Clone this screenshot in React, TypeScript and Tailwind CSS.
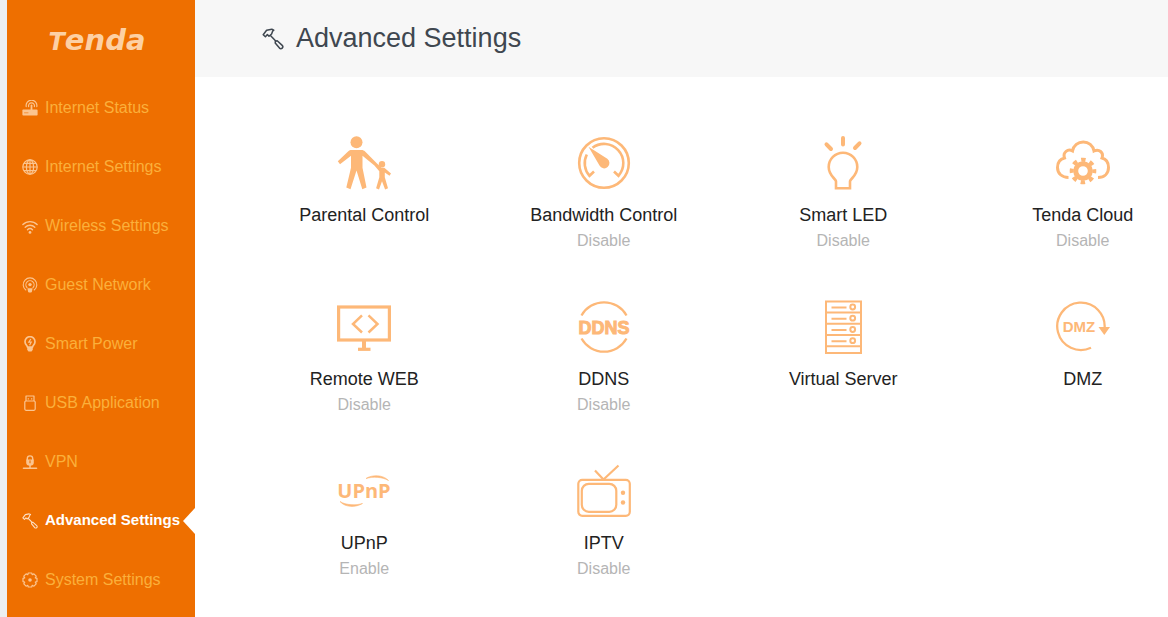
import React, { useState } from 'react';
import clsx from 'clsx';

type IconProps = { className?: string };

/* SIDEBAR ICONS */

const RouterIcon = ({ className }: IconProps) => (
  <svg viewBox="0 0 16 16" className={className} fill="none" stroke="currentColor" strokeWidth="1.2" strokeLinecap="round" aria-hidden="true">
    <path d="M4.2 6.6a5.4 5.4 0 1 1 10.6 0" />
    <path d="M6.6 6.6a3 3 0 1 1 5.8 0" />
    <path d="M9.5 5.5v5" strokeWidth="1.8" />
    <rect x="0.4" y="9.6" width="15.2" height="6" rx="0.8" fill="currentColor" stroke="none" />
    <path d="M2.5 12.8h3.5" stroke="#ee6f00" strokeWidth="0.6" />
  </svg>
);

const GlobeIcon = ({ className }: IconProps) => (
  <svg viewBox="0 0 16 16" className={className} fill="none" stroke="currentColor" strokeWidth="1.2" aria-hidden="true">
    <circle cx="8" cy="8" r="7.2" />
    <ellipse cx="8" cy="8" rx="3.6" ry="7.2" />
    <path d="M8 0.8v14.4M0.8 8h14.4M2 4.4h12M2 11.6h12" />
  </svg>
);

const WifiIcon = ({ className }: IconProps) => (
  <svg viewBox="0 0 16 16" className={className} fill="none" stroke="currentColor" strokeWidth="1.4" strokeLinecap="round" aria-hidden="true">
    <path d="M0.9 6.6a10 10 0 0 1 14.2 0" />
    <path d="M3.2 9.3a6.8 6.8 0 0 1 9.6 0" />
    <path d="M5.5 11.8a3.6 3.6 0 0 1 5 0" />
    <circle cx="8" cy="14.4" r="1.4" fill="currentColor" stroke="none" />
  </svg>
);

const GuestIcon = ({ className }: IconProps) => (
  <svg viewBox="0 0 16 16" className={className} fill="none" stroke="currentColor" strokeWidth="1.1" strokeLinecap="round" aria-hidden="true">
    <path d="M3.8 13a6.8 6.8 0 1 1 8.4 0" />
    <path d="M5 10.6a4.1 4.1 0 1 1 6 0" />
    <circle cx="8" cy="7.6" r="1.7" fill="currentColor" stroke="none" />
    <path d="M5.4 11.2h5.2l-0.7 3.6a1 1 0 0 1-1 0.8H7.1a1 1 0 0 1-1-0.8z" fill="currentColor" stroke="none" />
  </svg>
);

const PowerIcon = ({ className }: IconProps) => (
  <svg viewBox="0 0 16 16" className={className} fill="none" stroke="currentColor" strokeWidth="1.7" aria-hidden="true">
    <path d="M5.6 11.2C5.2 9.4 3 8.6 3 5.7a5 5 0 0 1 10 0c0 2.9-2.2 3.7-2.6 5.5z" />
    <path d="M8.8 3 6.8 6.2h2.4L7.6 9.2" strokeWidth="1.2" />
    <path d="M5.2 11.2h5.6v2.5L9.5 15.6h-3L5.2 13.7z" fill="currentColor" stroke="none" />
  </svg>
);

const UsbIcon = ({ className }: IconProps) => (
  <svg viewBox="0 0 16 16" className={className} fill="none" stroke="currentColor" strokeWidth="1.2" strokeLinejoin="round" aria-hidden="true">
    <path d="M4 6V1h8v5" />
    <rect x="2.8" y="6" width="10.4" height="9.3" rx="1.2" />
    <path d="M6.3 3.2v1.3M9.7 3.2v1.3" />
  </svg>
);

const VpnIcon = ({ className }: IconProps) => (
  <svg viewBox="0 0 16 16" className={className} fill="none" stroke="currentColor" strokeLinecap="round" aria-hidden="true">
    <path d="M5.3 6V4.6a2.7 2.7 0 0 1 5.4 0V6" strokeWidth="1.4" />
    <path d="M4.2 5.5h7.6v3.2a3.8 3 0 0 1-7.6 0z" fill="currentColor" stroke="none" />
    <path d="M8 6.8v2" stroke="#ee6f00" strokeWidth="1.1" />
    <path d="M8 11v3" strokeWidth="1.5" />
    <path d="M1.5 14.3h13" strokeWidth="1.6" />
  </svg>
);

const HammerIcon = ({ className }: IconProps) => (
  <svg viewBox="0 0 22 22" className={className} fill="none" stroke="currentColor" strokeWidth="1.5" strokeLinejoin="round" aria-hidden="true">
    <path d="M1.2 6.8 4.6 2.2 9.8 1.2 11.8 2.2 10.6 3.2 9.6 6 7 8.2 5.4 6.6 3.4 8.8z" />
    <path d="M8.2 7.2 14.2 13.4" />
    <path d="M13.4 13.2 15.2 12.8 20.2 17.4a1.9 1.9 0 0 1-2.7 2.7L13.2 15z" />
  </svg>
);

const GearIcon = ({ className }: IconProps) => (
  <svg viewBox="0 0 16 16" className={className} fill="none" stroke="currentColor" strokeWidth="1.2" strokeLinejoin="round" aria-hidden="true">
    <path d="M6.3 1h3.4l0.5 1.7 1.7-0.8 2.3 2.3-0.9 1.7 1.7 0.5v3.3l-1.7 0.5 0.9 1.7-2.3 2.3-1.7-0.9-0.5 1.7H6.3l-0.5-1.7-1.7 0.9-2.3-2.3 0.9-1.7L1 9.7V6.4l1.7-0.5-0.9-1.7 2.3-2.3 1.7 0.8z" />
    <circle cx="8" cy="8" r="1.8" fill="currentColor" stroke="none" />
  </svg>
);

/* TILE ICONS */

const ParentalIcon = ({ className }: IconProps) => (
  <svg viewBox="0 0 54 54" className={className} fill="currentColor" aria-hidden="true">
    <circle cx="19.5" cy="6.3" r="6" />
    <path d="M14.5 14h10c1.5 0 2.6 0.5 3.6 1.5L40 27.5l4.500 4.200h2.800l6.700 5.800-1.500 2.300-4.700-3.200v4.600L51 52.200l-2.900 1.300-3.100-8.300-3 8.300-2.900-1.300 3.200-11v-6L37.400 29.500 25.500 19.800v12L29.500 51.500l-4.200 1.800L19.500 34.500 13.500 53.300l-4.200-1.800L14 31.800v-12L3 28.200 0.800 25.200 11.300 15.300C12.200 14.400 13.200 14 14.500 14z" />
    <circle cx="45" cy="28.3" r="3.2" />
  </svg>
);

const GaugeIcon = ({ className }: IconProps) => (
  <svg viewBox="0 0 54 54" className={className} fill="none" stroke="currentColor" strokeWidth="2.6" aria-hidden="true">
    <circle cx="27" cy="27" r="24.8" />
    <path d="M17 35.5 12.5 39.8A19.2 19.2 0 0 1 9.8 18.5" />
    <path d="M15.5 11.8A19.2 19.2 0 0 1 41.5 39.8L37 35.5" />
    <path d="M11.500 10.800 30.300 22.800a5.300 5.300 0 1 1-7.800 6.800z" fill="currentColor" stroke="none" />
  </svg>
);

const LedIcon = ({ className }: IconProps) => (
  <svg viewBox="0 0 54 54" className={className} fill="none" stroke="currentColor" strokeWidth="2.6" aria-hidden="true">
    <path d="M20 52.3V45.5C20 42.8 12.7 39.8 12.7 31a14.3 14.3 0 0 1 28.6 0C41.3 39.8 34 42.8 34 45.5v6.8z" />
    <path d="M27 2v6.5M10.500 8.300 15 13M43.500 7.300 39 12" strokeWidth="4" strokeLinecap="round" />
  </svg>
);

const CloudIcon = ({ className }: IconProps) => (
  <svg viewBox="0 0 54 54" className={className} fill="none" stroke="currentColor" aria-hidden="true">
    <path d="M12.5 41.5C6 41.5 1.5 37.5 1.5 31.5c0-5 3-8.5 7-9.5C6.5 16 12 12.500 16.500 15 17.500 9.500 22 6 27.300 6s9.700 3.500 10.700 9c5-2.500 10 1.500 8 7 4 1 6.500 4.500 6.500 9.500 0 6-4 10-10.500 10" strokeWidth="3" />
    <circle cx="27" cy="35" r="7.3" strokeWidth="5" />
    <circle cx="27" cy="35" r="11.3" strokeWidth="4" strokeDasharray="4.437 4.437" strokeDashoffset="2.2" />
  </svg>
);

const RemoteIcon = ({ className }: IconProps) => (
  <svg viewBox="0 0 54 54" className={className} fill="none" stroke="currentColor" aria-hidden="true">
    <rect x="1.6" y="7" width="50.8" height="33" strokeWidth="3.2" />
    <path d="M27 41v8" strokeWidth="4" />
    <path d="M21 49.3h12.5" strokeWidth="3.2" />
    <path d="M25 15.3 16 24l9 8.5M31.5 15.300l9 8.700-9 8.500" strokeWidth="2.5" />
  </svg>
);

const DdnsIcon = ({ className }: IconProps) => (
  <svg viewBox="0 0 54 54" className={className} aria-hidden="true">
    <path d="M4.500 15.500a25.800 25.800 0 0 1 45 0M4.500 38.500a25.800 25.800 0 0 0 45 0" fill="none" stroke="currentColor" strokeWidth="2.3" />
    <text x="27" y="34" textAnchor="middle" fontSize="18" fontWeight="700" fill="currentColor" stroke="currentColor" strokeWidth="1" fontFamily="'Liberation Sans', sans-serif">DDNS</text>
  </svg>
);

const ServerIcon = ({ className }: IconProps) => (
  <svg viewBox="0 0 54 54" className={className} fill="none" stroke="currentColor" strokeWidth="2" aria-hidden="true">
    <rect x="10" y="1.5" width="35" height="51.5" />
    <path d="M10 12.500h35M10 23.700h35M10 35h35M10 46.200h35" />
    <path d="M15.500 7.500h15M15.500 18.700h15M15.500 30h15M15.500 41.200h15" />
    <circle cx="36.7" cy="7" r="2.4" />
    <circle cx="36.7" cy="18.2" r="2.4" />
    <circle cx="36.7" cy="29.5" r="2.4" />
    <circle cx="36.7" cy="40.7" r="2.4" />
  </svg>
);

const DmzIcon = ({ className }: IconProps) => (
  <svg viewBox="0 0 54 54" className={className} aria-hidden="true">
    <path d="M48.500 29A23.700 23.700 0 1 0 35 47.800" fill="none" stroke="currentColor" strokeWidth="2.3" />
    <path d="M42.500 27h11.500l-5.700 8z" fill="currentColor" />
    <text x="23" y="32" textAnchor="middle" fontSize="15" fontWeight="700" fill="currentColor" fontFamily="'Liberation Sans', sans-serif">DMZ</text>
  </svg>
);

const UpnpIcon = ({ className }: IconProps) => (
  <svg viewBox="0 0 54 54" className={className} aria-hidden="true">
    <path d="M29 14.500C35 10.500 46 10.500 51.500 16.500 45 12.800 36 12.500 29 14.500zM3 37.500c5 5.800 15 6.500 22.500 2C19 41.500 9 41.300 3 37.500z" fill="currentColor" stroke="currentColor" strokeWidth="0.6" />
    <text x="27" y="34" textAnchor="middle" fontSize="20" fontWeight="700" fill="currentColor" fontFamily="'Open Sans', sans-serif">UPnP</text>
  </svg>
);

const IptvIcon = ({ className }: IconProps) => (
  <svg viewBox="0 0 54 54" className={className} fill="none" stroke="currentColor" strokeWidth="2.2" aria-hidden="true">
    <rect x="1.3" y="15.8" width="51.5" height="36" rx="4" />
    <rect x="4.8" y="19.8" width="34.5" height="28" rx="7" />
    <path d="M18 6.500l8.500 9M41.500 1.500l-15 14" />
    <circle cx="46" cy="28.8" r="2.2" fill="currentColor" stroke="none" />
    <circle cx="46" cy="38.5" r="2.2" fill="currentColor" stroke="none" />
  </svg>
);

const navItems = [
  { label: 'Internet Status', icon: RouterIcon },
  { label: 'Internet Settings', icon: GlobeIcon },
  { label: 'Wireless Settings', icon: WifiIcon },
  { label: 'Guest Network', icon: GuestIcon },
  { label: 'Smart Power', icon: PowerIcon },
  { label: 'USB Application', icon: UsbIcon },
  { label: 'VPN', icon: VpnIcon },
  { label: 'Advanced Settings', icon: HammerIcon },
  { label: 'System Settings', icon: GearIcon },
];

const tiles = [
  { label: 'Parental Control', status: '', icon: ParentalIcon },
  { label: 'Bandwidth Control', status: 'Disable', icon: GaugeIcon },
  { label: 'Smart LED', status: 'Disable', icon: LedIcon },
  { label: 'Tenda Cloud', status: 'Disable', icon: CloudIcon },
  { label: 'Remote WEB', status: 'Disable', icon: RemoteIcon },
  { label: 'DDNS', status: 'Disable', icon: DdnsIcon },
  { label: 'Virtual Server', status: '', icon: ServerIcon },
  { label: 'DMZ', status: '', icon: DmzIcon },
  { label: 'UPnP', status: 'Enable', icon: UpnpIcon },
  { label: 'IPTV', status: 'Disable', icon: IptvIcon },
];

const App: React.FC = () => {
  const [active, setActive] = useState('Advanced Settings');

  return (
    <div className="flex min-h-screen bg-[#eceff1] pl-[7px] font-['Liberation_Sans',Arial,sans-serif]">
      <aside className="w-[188px] shrink-0 bg-[#ee6f00]">
        <div className="flex h-[78px] items-center justify-center pr-2 pt-1 font-['DejaVu_Sans',sans-serif] font-bold italic text-[#fdd0a3]">
          <div className="flex items-baseline leading-8">
            <span className="text-[24px]">T</span>
            <span className="text-[29px]">enda</span>
          </div>
        </div>
        <nav>
          {navItems.map(({ label, icon: Icon }) => (
            <a
              key={label}
              href="#"
              onClick={() => setActive(label)}
              className={clsx(
                'relative flex h-[59px] items-center gap-[7px] whitespace-nowrap pl-[15px]',
                active === label ? 'text-[15px] font-bold text-white' : 'text-base text-[#fbb03b]'
              )}
            >
              <Icon className={clsx('size-4 shrink-0', active === label ? 'text-[#fde0c4]' : 'text-[#fbc590]')} />
              {label}
              {active === label && (
                <span className="absolute right-0 top-1/2 -translate-y-1/2 border-y-[13px] border-r-[12px] border-y-transparent border-r-white" />
              )}
            </a>
          ))}
        </nav>
      </aside>

      <main className="min-w-0 flex-1 bg-white">
        <header className="flex h-[77px] items-center gap-3 bg-[#f7f7f7] pl-[67px] text-[#3f4750]">
          <HammerIcon className="size-[22px]" />
          <h1 className="text-[27px]">Advanced Settings</h1>
        </header>

        <div className="grid grid-cols-4 gap-x-[69px] gap-y-[47px] pl-[84px] pt-[59px]">
          {tiles.map(({ label, status, icon: Icon }) => (
            <button key={label} type="button" className="flex flex-col items-center">
              <Icon className="mb-3 size-[54px] text-[#fdb878]" />
              <span className="whitespace-nowrap text-lg leading-[26px] text-[#222]">{label}</span>
              <span className="h-[25px] text-base leading-[25px] text-[#b5b5b5]">{status}</span>
            </button>
          ))}
        </div>
      </main>
    </div>
  );
};

export default App;
